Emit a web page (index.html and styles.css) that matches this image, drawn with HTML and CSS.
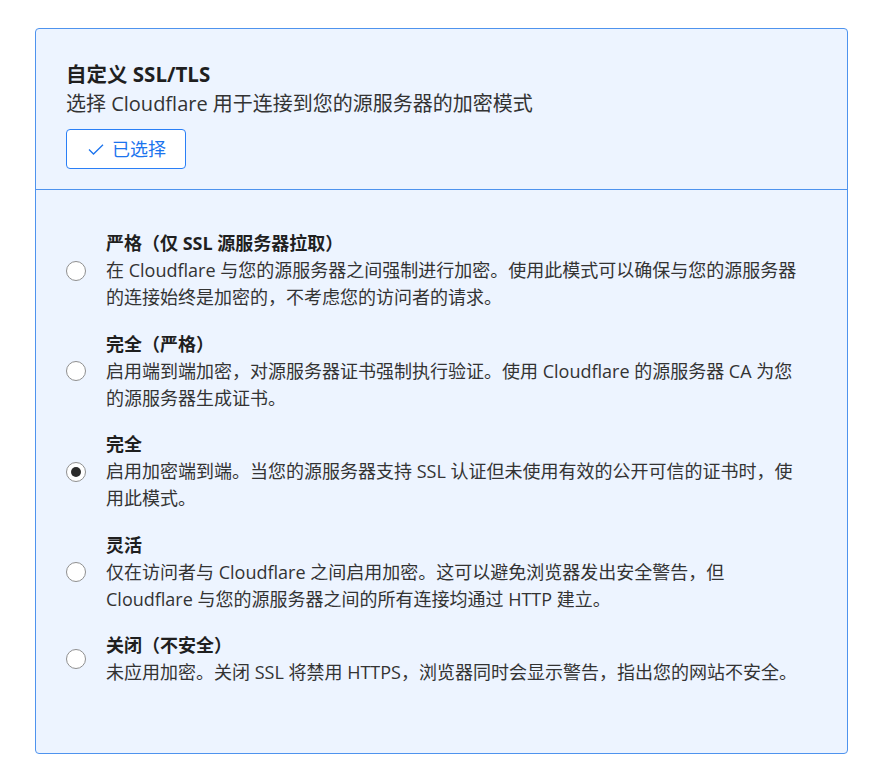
FILE: index.html
```html
<!DOCTYPE html>
<html lang="zh-CN">
<head>
<meta charset="utf-8">
<title>自定义 SSL/TLS</title>
<link rel="stylesheet" href="styles.css">
</head>
<body>
<section class="card">
  <header class="card-head">
    <h2 class="card-title">自定义 SSL/TLS</h2>
    <p class="card-sub">选择 Cloudflare 用于连接到您的源服务器的加密模式</p>
    <button class="sel-btn" type="button">
      <svg class="check" width="16" height="12" viewBox="0 0 16 12" aria-hidden="true"><polyline points="1,5.5 5.5,10 15,0.8" fill="none" stroke="currentColor" stroke-width="1.3"/></svg>
      <span>已选择</span>
    </button>
  </header>
  <div class="options">
    <label class="opt">
      <span class="radio"></span>
      <span class="opt-text">
        <span class="opt-title">严格（仅 SSL 源服务器拉取）</span>
        <span class="opt-desc">在 Cloudflare 与您的源服务器之间强制进行加密。使用此模式可以确保与您的源服务器的连接始终是加密的，不考虑您的访问者的请求。</span>
      </span>
    </label>
    <label class="opt">
      <span class="radio"></span>
      <span class="opt-text">
        <span class="opt-title">完全（严格）</span>
        <span class="opt-desc">启用端到端加密，对源服务器证书强制执行验证。使用 Cloudflare 的源服务器 CA 为您的源服务器生成证书。</span>
      </span>
    </label>
    <label class="opt">
      <span class="radio checked"></span>
      <span class="opt-text">
        <span class="opt-title">完全</span>
        <span class="opt-desc">启用加密端到端。当您的源服务器支持 SSL 认证但未使用有效的公开可信的证书时，使用此模式。</span>
      </span>
    </label>
    <label class="opt">
      <span class="radio"></span>
      <span class="opt-text">
        <span class="opt-title">灵活</span>
        <span class="opt-desc">仅在访问者与 Cloudflare 之间启用加密。这可以避免浏览器发出安全警告，但 Cloudflare 与您的源服务器之间的所有连接均通过 HTTP 建立。</span>
      </span>
    </label>
    <label class="opt">
      <span class="radio"></span>
      <span class="opt-text">
        <span class="opt-title">关闭（不安全）</span>
        <span class="opt-desc">未应用加密。关闭 SSL 将禁用 HTTPS，浏览器同时会显示警告，指出您的网站不安全。</span>
      </span>
    </label>
  </div>
</section>
</body>
</html>
```

FILE: styles.css
```css
* { box-sizing: border-box; }

html, body {
  margin: 0;
  padding: 0;
  background: #ffffff;
}

body {
  font-family: "Open Sans", "Noto Sans CJK SC", sans-serif;
  color: #333333;
}

.card {
  margin: 28px 35px 0 35px;
  border: 1px solid #4e93ee;
  border-radius: 4px;
  background: #edf4ff;
}

.card-head {
  padding: 30px 30px 20px 30px;
  border-bottom: 1px solid #4e93ee;
}

.card-title {
  margin: 0;
  font-size: 20.5px;
  line-height: 30px;
  font-weight: 700;
  color: #1f1f1f;
}

.card-sub {
  margin: 0;
  font-size: 20px;
  line-height: 30px;
  color: #333333;
}

.sel-btn {
  margin-top: 10px;
  width: 120px;
  height: 40px;
  display: flex;
  align-items: center;
  justify-content: center;
  gap: 8px;
  padding: 0 0 0 2px;
  border: 1px solid #2a7ff6;
  border-radius: 4px;
  background: #ffffff;
  color: #1c74ee;
  font-family: "Open Sans", "Noto Sans CJK SC", sans-serif;
  font-size: 18px;
  line-height: 24px;
}

.check {
  display: block;
  margin-top: 1px;
}

.options {
  padding: 40px 40px 67px 30px;
  display: flex;
  flex-direction: column;
  gap: 19.5px;
}

.opt {
  display: flex;
  align-items: center;
  gap: 20px;
}

.radio {
  flex: none;
  width: 20px;
  height: 20px;
  border-radius: 50%;
  border: 1px solid #8f8f8f;
  background: #ffffff;
  display: flex;
  align-items: center;
  justify-content: center;
}

.radio.checked::after {
  content: "";
  width: 10px;
  height: 10px;
  border-radius: 50%;
  background: #2b2b2b;
}

.opt-text {
  display: flex;
  flex-direction: column;
  font-size: 18px;
  line-height: 27px;
}

.opt-title {
  font-weight: 700;
  color: #1f1f1f;
}

.opt-desc {
  color: #333333;
}
```
